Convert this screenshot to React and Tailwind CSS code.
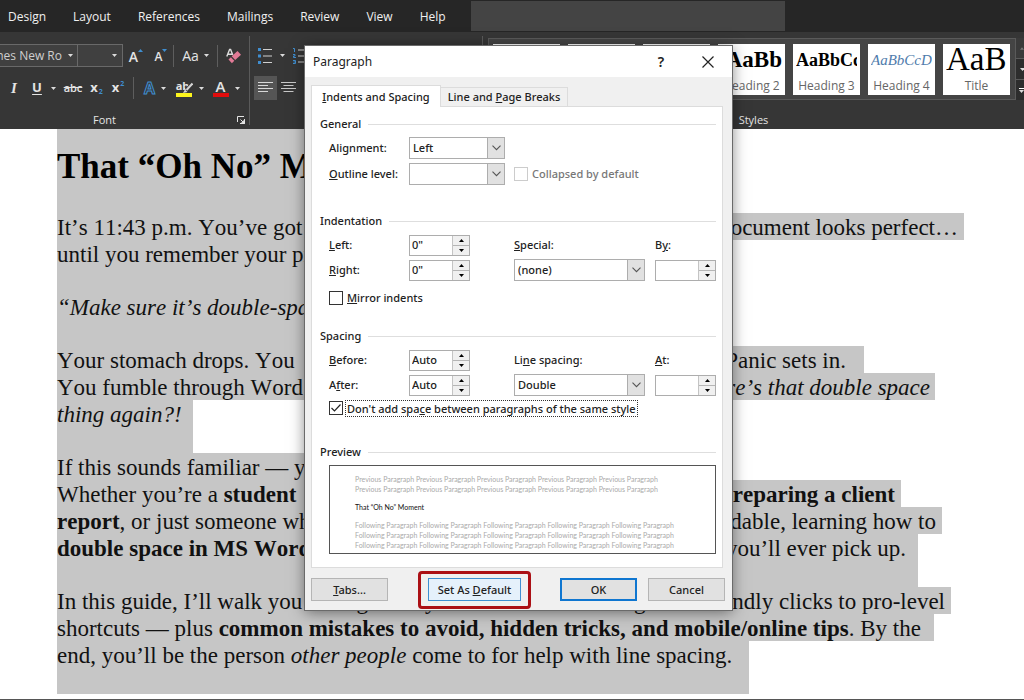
import React from 'react';

const menuTabs = ['Design', 'Layout', 'References', 'Mailings', 'Review', 'View', 'Help'];

const styleCards = [
    { name: 'Normal', sample: 'AaBbCcD', className: 'text-base text-black' },
    { name: 'No Spacing', sample: 'AaBbCcD', className: 'text-base text-black' },
    { name: 'Heading 1', sample: 'AaBb', className: 'text-2xl font-bold text-black' },
    { name: 'Heading 2', sample: 'AaBb', className: 'justify-end text-[23px] font-bold text-black' },
    { name: 'Heading 3', sample: 'AaBbCc', className: 'text-lg font-bold text-black' },
    { name: 'Heading 4', sample: 'AaBbCcD', className: 'text-[15px] italic text-[#4f7cac]' },
    { name: 'Title', sample: 'AaB', className: 'text-[33px] text-black' },
];

const Caret = () => (
    <svg className="h-[3px] w-[5px] shrink-0" viewBox="0 0 5 3" fill="#dcdcdc">
        <path d="M0 0h5L2.5 3z" />
    </svg>
);

const ToolButton = ({ label, className, children }) => (
    <button aria-label={label} className={`flex h-6 shrink-0 items-center justify-center ${className}`}>
        {children}
    </button>
);

const Divider = () => <span className="h-[22px] w-px shrink-0 bg-[#5e5e5e]" />;

const Arrow = ({ up }) => (
    <svg className="mb-3 h-[3px] w-[5px]" viewBox="0 0 5 3" fill="#3f8ed0">
        <path d={up ? 'M0 3h5L2.5 0z' : 'M0 0h5L2.5 3z'} />
    </svg>
);

const FontGroup = () => (
    <div className="flex w-[249px] shrink-0 flex-col pt-3 text-[#e4e4e4]">
        <div className="flex h-[23px] items-center">
            <button aria-label="Font name" className="flex h-[23px] w-[78px] items-center justify-between overflow-hidden border border-l-0 border-[#696969] bg-[#404040] pr-1 text-xs whitespace-nowrap text-[#cfcfcf]">
                <span className="flex w-[62px] justify-end">nes New Ro</span>
                <Caret />
            </button>
            <button aria-label="Font size" className="flex h-[23px] w-[45px] items-center justify-end border border-l-0 border-[#696969] bg-[#404040] pr-[5px]">
                <Caret />
            </button>
            <ToolButton label="Grow font" className="w-[26px] pt-[2px] text-sm font-semibold">A<Arrow up /></ToolButton>
            <ToolButton label="Shrink font" className="w-6 pt-[2px] text-xs font-semibold">A<Arrow /></ToolButton>
            <Divider />
            <ToolButton label="Change case" className="w-[43px] gap-[5px] text-sm">Aa<Caret /></ToolButton>
            <Divider />
            <ToolButton label="Clear formatting" className="w-[31px]">
                <svg className="h-4 w-[15px]" viewBox="0 0 15 16" fill="none">
                    <path d="M.8 8.500 3.600 1.500h1L6.800 7M2 6.200h4" stroke="#dcdcdc" strokeWidth="1.4" />
                    <path d="M5.700 8.300 11.500 3l3.500 3.700-5.800 5.400z" fill="#e27a96" />
                    <path d="m4.900 9.200 3.400 3.600-2.400 2.400-3.400-3.600z" fill="#e27a96" />
                </svg>
            </ToolButton>
        </div>
        <div className="mt-[9px] flex h-6 items-center">
            <ToolButton label="Italic" className="w-7 font-['Liberation_Serif',serif] text-[15px] font-bold italic">I</ToolButton>
            <ToolButton label="Underline" className="w-[32px] gap-[9px] text-[13px] font-bold"><u className="underline-offset-2">U</u><Caret /></ToolButton>
            <ToolButton label="Strikethrough" className="w-[26px] text-[11px] font-semibold line-through">abc</ToolButton>
            <ToolButton label="Subscript" className="w-[21px] text-[13px] font-bold">x<span className="mt-2 ml-px text-[7px] text-[#3f8ed0]">2</span></ToolButton>
            <ToolButton label="Superscript" className="w-[26px] pr-1 text-[13px] font-bold">x<span className="mb-2 ml-px text-[7px] text-[#3f8ed0]">2</span></ToolButton>
            <Divider />
            <ToolButton label="Text effects" className="w-[38px] gap-[6px] pl-1">
                <span className="text-base font-bold text-transparent [-webkit-text-stroke:1px_#3f8ed0]">A</span>
                <Caret />
            </ToolButton>
            <ToolButton label="Text highlight colour" className="w-[36px] gap-[6px]">
                <span className="relative flex flex-col items-center">
                    <span className="pr-1 text-[11px] leading-3 font-bold">ab</span>
                    <svg className="absolute right-0 bottom-[3px] h-3 w-3" viewBox="0 0 12 12" fill="none">
                        <path d="M11.500 1.500 5.500 8" stroke="#363636" strokeWidth="4" />
                        <path d="M11.500 1.500 5.500 8" stroke="#d4d4d4" strokeWidth="2" />
                        <path d="M4 7.500 6.500 10l-4.500 1z" fill="#d4d4d4" />
                    </svg>
                    <span className="mt-px h-1 w-4 bg-[#fdf51d]" />
                </span>
                <Caret />
            </ToolButton>
            <ToolButton label="Font colour" className="w-[36px] gap-[6px]">
                <span className="flex flex-col items-center">
                    <span className="text-[15px] leading-3 font-semibold">A</span>
                    <span className="mt-px h-1 w-4 bg-[#e10c0c]" />
                </span>
                <Caret />
            </ToolButton>
        </div>
        <div className="mt-3 flex items-center justify-end pr-1">
            <span className="flex-1 pr-7 text-center text-[11px] leading-4">Font</span>
            <button aria-label="Font settings">
                <svg className="h-2 w-2" viewBox="0 0 8 8" fill="none" stroke="#e4e4e4">
                    <path d="M.5 6V.5H7M3.500 3.500l3 3M7.500 3v4.500H3" />
                    <path d="M7.500 4v3.500H4z" fill="#e4e4e4" />
                </svg>
            </button>
        </div>
    </div>
);

const ParagraphGroup = () => (
    <div className="my-1 flex w-[234px] shrink-0 flex-col border-r border-l border-[#5a5a5a] pt-2">
        <div className="flex h-[23px] items-center gap-2 pl-2">
            <ToolButton label="Bullets" className="gap-2">
                <svg className="h-4 w-[14px]" viewBox="0 0 14 16">
                    <path d="M0 0h3v3H0zM0 6.500h3v3H0zM0 13h3v3H0z" fill="#3f8ed0" />
                    <path d="M5 1h9v1H5zM5 7.500h9v1H5zM5 14h9v1H5z" fill="#d0d0d0" />
                </svg>
                <Caret />
            </ToolButton>
            <ToolButton label="Numbering">
                <svg className="h-4 w-[14px]" viewBox="0 0 14 16" fill="none">
                    <path d="M0 .5h1.500V4M0 6.500h2v1.500H.500v1.500H3M0 12.500h2.500v3H0M.500 14H2" stroke="#3f8ed0" />
                    <path d="M5 2h9M5 8h9M5 14h9" stroke="#d0d0d0" />
                </svg>
            </ToolButton>
        </div>
        <div className="mt-[9px] flex h-6 items-center gap-1 pl-1">
            <ToolButton label="Align left" className="w-[23px] bg-[#555]">
                <svg className="h-3 w-[15px]" viewBox="0 0 15 12" stroke="#d8d8d8"><path d="M0 .5h15M0 3.500h10M0 6.500h15M0 9.500h10" /></svg>
            </ToolButton>
            <ToolButton label="Centre" className="w-[15px]">
                <svg className="h-3 w-[15px]" viewBox="0 0 15 12" stroke="#c8c8c8"><path d="M0 .5h15M2.500 3.500h10M0 6.500h15M2.500 9.500h10" /></svg>
            </ToolButton>
        </div>
    </div>
);

const StylesGroup = () => (
    <div className="flex min-w-0 flex-1 flex-col pt-[6px]">
        <div className="flex h-[62px] pl-[5px]">
            <div className="flex min-w-0 flex-1 items-center justify-end gap-2 overflow-hidden border border-[#5a5a5a] bg-[#444] pr-[5px]">
                {styleCards.map((card) => (
                    <button key={card.name} className="flex h-[51px] w-[67px] shrink-0 flex-col bg-white px-[3px]">
                        <span className={`flex h-[34px] w-full items-center overflow-hidden font-['Liberation_Serif',serif] whitespace-nowrap ${card.className}`}>
                            {card.sample}
                        </span>
                        <span className="w-full text-center text-xs leading-[18px] whitespace-nowrap text-[#666]">{card.name}</span>
                    </button>
                ))}
            </div>
            <div className="flex w-2 shrink-0 flex-col gap-px overflow-hidden bg-[#5a5a5a]">
                <button aria-label="Scroll up" className="flex flex-1 items-center bg-[#3a3a3a] pl-1"><svg className="h-[3px] w-[5px]" viewBox="0 0 5 3" fill="#777"><path d="M0 3h5L2.500 0z" /></svg></button>
                <button aria-label="Scroll down" className="flex flex-1 items-center bg-[#2d2d2d] pl-1"><Caret /></button>
                <button aria-label="More styles" className="flex flex-1 flex-col items-start justify-center gap-px bg-[#2d2d2d] pl-[3px]">
                    <span className="h-px w-[7px] bg-white" />
                    <Caret />
                </button>
            </div>
        </div>
        <span className="mt-3 text-center text-[11px] leading-4 text-[#e4e4e4]">Styles</span>
    </div>
);

const Line = ({ width, children }) => (
    <div className={`flex h-[27px] justify-between bg-[#c6c6c6] pt-px whitespace-pre ${width}`}>{children}</div>
);

const Gap = ({ width }) => <div className={`h-[26px] bg-[#c6c6c6] ${width}`} />;

const Document = () => (
    <main className="flex-1 bg-white pl-[57px] font-['Liberation_Serif','Times_New_Roman',serif] text-[23px] leading-[27px] text-[#111] [font-kerning:none]">
        <h1 className="h-[84px] w-[480px] bg-[#c6c6c6] pt-[18px] text-[35px] leading-10 font-bold whitespace-nowrap text-black">
            That “Oh No” Moment
        </h1>
        <Line width="w-[907px] pr-[6px]"><span>It’s 11:43 p.m. You’ve got</span><span>ocument looks perfect…</span></Line>
        <Line width="w-[480px]">until you remember your professor’s</Line>
        <Gap width="w-[480px]" />
        <Line width="w-[480px]"><i>“Make sure it’s double-spaced.”</i></Line>
        <Gap width="w-[480px]" />
        <Line width="w-[807px] pr-[18px]"><span>Your stomach drops. You</span><span>Panic sets in.</span></Line>
        <Line width="w-[878px] pr-[5px]"><span>You fumble through Word</span><i>re’s that double space</i></Line>
        <Line width="w-[136px]"><i>thing again?!</i></Line>
        <Gap width="w-[136px]" />
        <Line width="w-[480px]">If this sounds familiar — you’re not</Line>
        <Line width="w-[844px] pr-[6px]"><span>Whether you’re a <b>student</b></span><b>reparing a client</b></Line>
        <Line width="w-[885px] pr-[6px]"><span><b>report</b>, or just someone who</span><span>dable, learning how to</span></Line>
        <Line width="w-[861px] pr-[12px]"><b>double space in MS Word</b><span>you’ll ever pick up.</span></Line>
        <Gap width="w-[861px]" />
        <Line width="w-[894px] pr-[6px]"><span>In this guide, I’ll walk you through every</span><span>beginner-friendly clicks to pro-level</span></Line>
        <Line width="w-[877px]">
            <span>shortcuts — plus <b>common mistakes to avoid, hidden tricks, and mobile/online tips</b>. By the</span>
        </Line>
        <Line width="w-[692px]"><span>end, you’ll be the person <i>other people</i> come to for help with line spacing.</span></Line>
        <Gap width="w-[692px]" />
    </main>
);

const Chevron = () => (
    <span className="pointer-events-none absolute inset-y-0 right-0 flex w-[18px] items-center justify-center border border-[#adadad] bg-[#e1e1e1]">
        <svg className="h-[6px] w-[9px]" viewBox="0 0 9 6" fill="none" stroke="#555" strokeWidth="1.1"><path d="m.500.700 4 4 4-4" /></svg>
    </span>
);

const SelectBox = ({ id, value, className }) => (
    <span className={`relative flex h-[22px] ${className}`}>
        <select id={id} defaultValue={value} className="w-full appearance-none border border-[#adadad] bg-white pl-[3px] text-[#222] outline-none">
            <option value={value}>{value}</option>
        </select>
        <Chevron />
    </span>
);

const Spinner = ({ id, value }) => (
    <span className="flex h-[21px] w-[61px] border border-[#adadad] bg-white">
        <input id={id} defaultValue={value} className="w-0 flex-1 pl-[2px] text-[#222] outline-none" />
        <span className="flex w-[17px] flex-col gap-px border-l border-[#c4c4c4] bg-[#b5b5b5]">
            <button aria-label={`Increase ${id}`} className="flex flex-1 items-center justify-center bg-[#f0f0f0]">
                <svg className="h-[3px] w-[5px]" viewBox="0 0 5 3"><path d="M0 3h5L2.500 0z" /></svg>
            </button>
            <button aria-label={`Decrease ${id}`} className="flex flex-1 items-center justify-center bg-[#f0f0f0]">
                <svg className="h-[3px] w-[5px]" viewBox="0 0 5 3"><path d="M0 0h5L2.500 3z" /></svg>
            </button>
        </span>
    </span>
);

const Legend = ({ children }) => (
    <h3 className="flex h-[18px] items-center gap-[7px] font-medium">
        {children}
        <span className="h-px flex-1 bg-[#dedede]" />
    </h3>
);

const CheckBox = ({ id, checked, disabled }) => (
    <span className="relative flex h-[14px] w-[14px] shrink-0">
        <input
            id={id}
            type="checkbox"
            defaultChecked={checked}
            disabled={disabled}
            className="peer h-full w-full appearance-none border border-[#333] bg-white disabled:border-[#ccc]"
        />
        <svg className="pointer-events-none absolute inset-0 hidden peer-checked:block" viewBox="0 0 14 14" fill="none" stroke="#222" strokeWidth="1.2">
            <path d="m2.500 7 3 3 6-6.500" />
        </svg>
    </span>
);

const row = 'grid h-[22px] grid-cols-[80px_105px_141px_1fr] items-center';

const Preview = () => (
    <div className="mt-1 ml-[9px] h-[89px] overflow-hidden border border-[#555] pt-2 pl-[25px] font-['Lato',sans-serif] text-[7px] leading-[10px] font-normal whitespace-nowrap text-[#aaa]">
        {[0, 1].map((i) => <p key={i}>{'Previous Paragraph '.repeat(5)}</p>)}
        <p className="my-2 text-[#111]">That “Oh No” Moment</p>
        {[0, 1, 2].map((i) => <p key={i}>{'Following Paragraph '.repeat(5)}</p>)}
    </div>
);

const ParagraphDialog = () => (
    <section
        role="dialog"
        aria-label="Paragraph"
        className="absolute top-[46px] left-[305px] w-[427px] bg-[#f0f0f0] pb-[2px] font-['Noto_Sans','Open_Sans',sans-serif] text-[11px] leading-4 font-medium text-[#222] shadow-[0_2px_14px_rgba(0,0,0,0.5)] outline outline-[#6a6a6a]"
    >
        <header className="flex h-[31px] items-center bg-white pr-[18px] pl-2">
            <h2 className="flex-1 text-xs font-normal">Paragraph</h2>
            <button aria-label="Help" className="w-5 text-sm font-semibold">?</button>
            <button aria-label="Close" className="ml-[31px]">
                <svg className="h-3 w-3" viewBox="0 0 12 12" stroke="#222" strokeWidth="1.2"><path d="m.500.500 11 11M11.500.500l-11 11" /></svg>
            </button>
        </header>

        <div className="px-[6px] pt-2">
            <div role="tablist" className="flex items-end">
                <button role="tab" aria-selected="true" className="relative -mb-px h-[22px] w-[130px] border border-b-0 border-[#dcdcdc] bg-white whitespace-nowrap"><u>I</u>ndents and Spacing</button>
                <button role="tab" aria-selected="false" className="h-[19px] w-[127px] border border-b-0 border-l-0 border-[#dcdcdc] whitespace-nowrap">Line and <u>P</u>age Breaks</button>
            </div>
            <div className="mr-[3px] border border-[#dcdcdc] bg-white pt-2 pr-[6px] pb-[13px] pl-2">
                <Legend>General</Legend>
                <div className="mt-1 flex flex-col gap-1 pl-[9px]">
                    <div className={row}>
                        <label htmlFor="alignment">Ali<u>g</u>nment:</label>
                        <SelectBox id="alignment" value="Left" className="w-24" />
                    </div>
                    <div className={row}>
                        <label htmlFor="outline"><u>O</u>utline level:</label>
                        <SelectBox id="outline" value="" className="w-24" />
                        <span className="col-span-2 flex items-center gap-1 text-[#777]">
                            <CheckBox id="collapsed" disabled />
                            <label htmlFor="collapsed">Collapsed by default</label>
                        </span>
                    </div>
                </div>

                <div className="mt-[27px]"><Legend>Indentation</Legend></div>
                <div className="mt-1 flex flex-col gap-[3px] pl-[9px]">
                    <div className={row}>
                        <label htmlFor="left"><u>L</u>eft:</label>
                        <Spinner id="left" value={'0"'} />
                        <label htmlFor="special"><u>S</u>pecial:</label>
                        <label htmlFor="by">B<u>y</u>:</label>
                    </div>
                    <div className={row}>
                        <label htmlFor="right"><u>R</u>ight:</label>
                        <Spinner id="right" value={'0"'} />
                        <SelectBox id="special" value="(none)" className="w-[131px]" />
                        <Spinner id="by" value="" />
                    </div>
                </div>
                <div className="mt-2 flex h-[18px] items-center gap-1 pl-[9px]">
                    <CheckBox id="mirror" />
                    <label htmlFor="mirror"><u>M</u>irror indents</label>
                </div>

                <div className="mt-5"><Legend>Spacing</Legend></div>
                <div className="mt-1 flex flex-col gap-[3px] pl-[9px]">
                    <div className={row}>
                        <label htmlFor="before"><u>B</u>efore:</label>
                        <Spinner id="before" value="Auto" />
                        <label htmlFor="line-spacing">Li<u>n</u>e spacing:</label>
                        <label htmlFor="at"><u>A</u>t:</label>
                    </div>
                    <div className={row}>
                        <label htmlFor="after">A<u>f</u>ter:</label>
                        <Spinner id="after" value="Auto" />
                        <SelectBox id="line-spacing" value="Double" className="w-[131px]" />
                        <Spinner id="at" value="" />
                    </div>
                </div>
                <div className="mt-[3px] flex h-[18px] items-center gap-[2px] pl-[9px]">
                    <CheckBox id="same-style" checked />
                    <label htmlFor="same-style" className="border border-dotted border-[#333] px-px leading-[15px] whitespace-nowrap">
                        Don't add spa<u>c</u>e between paragraphs of the same style
                    </label>
                </div>

                <div className="mt-[26px]"><Legend>Preview</Legend></div>
                <Preview />
            </div>

            <footer className="mt-[3px] flex h-[37px] items-center">
                <button className="h-[23px] w-[77px] border border-[#b5b5b5] bg-[#e1e1e1]"><u>T</u>abs...</button>
                <span className="ml-[30px] flex h-[38px] w-[113px] items-center justify-center rounded-sm border-[3px] border-[#ab1015]">
                    <button className="h-[23px] w-[93px] border border-[#3f8fd2] bg-[#e5f1fb]">Set As <u>D</u>efault</button>
                </span>
                <button className="ml-[29px] h-[23px] w-[77px] border-2 border-[#0f76d0] bg-[#e1e1e1]">OK</button>
                <button className="ml-[11px] h-[23px] w-[77px] border border-[#b5b5b5] bg-[#e1e1e1]">Cancel</button>
            </footer>
        </div>
    </section>
);

const App = () => (
    <div className="relative flex min-h-screen flex-col overflow-hidden bg-white font-['Open_Sans','Noto_Sans',sans-serif]">
        <nav className="flex h-8 items-center bg-[#262626] pl-2 text-xs text-[#f0f0f0]">
            <div className="flex w-[463px] shrink-0 gap-[27px] pt-px">
                {menuTabs.map((tab) => (
                    <button key={tab} className="shrink-0 whitespace-nowrap">{tab}</button>
                ))}
            </div>
            <input aria-label="Search" className="h-[30px] w-[314px] bg-[#444] outline-none" />
        </nav>
        <div className="flex h-[97px] bg-[#363636]">
            <FontGroup />
            <ParagraphGroup />
            <StylesGroup />
        </div>
        <Document />
        <div className="h-px bg-[#555]" />
        <ParagraphDialog />
    </div>
);

export default App;
